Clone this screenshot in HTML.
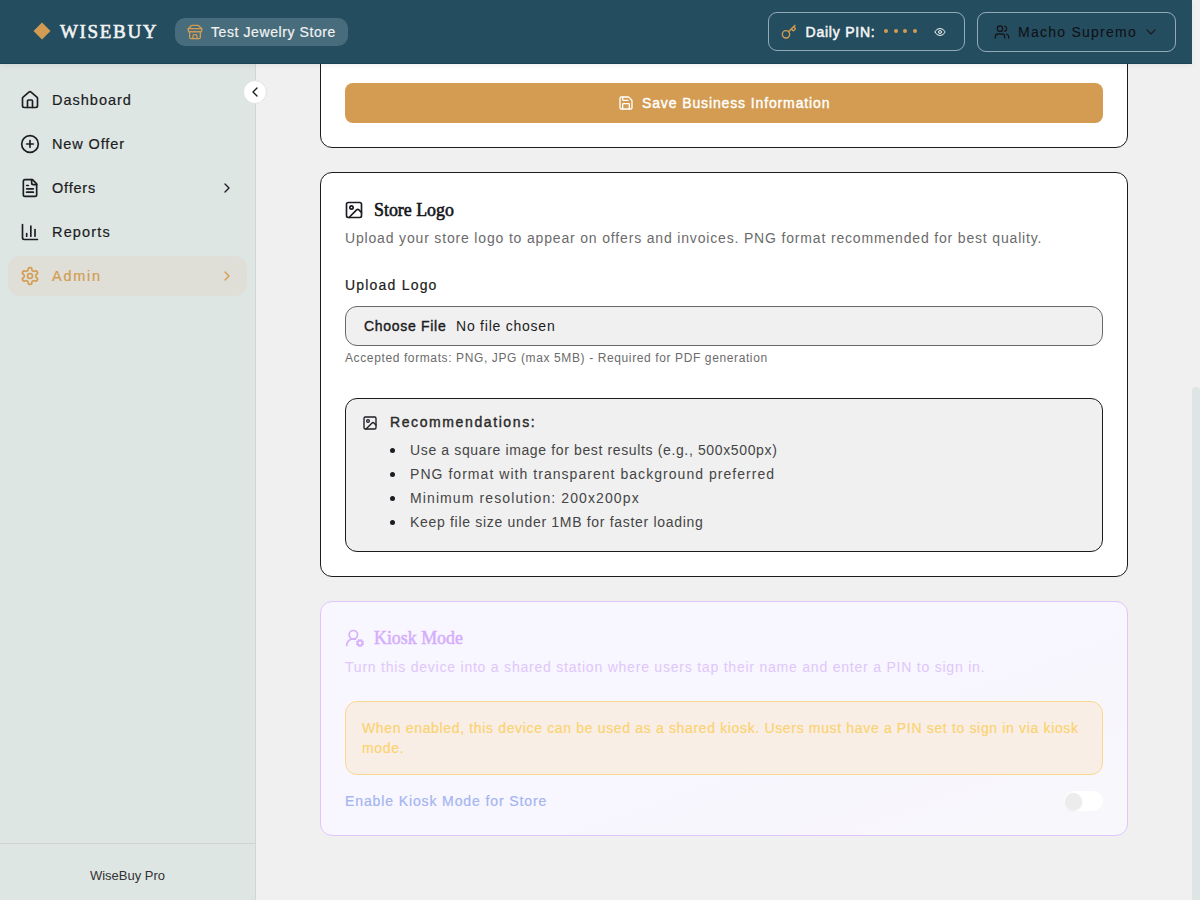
<!DOCTYPE html>
<html><head><meta charset="utf-8">
<style>
*{box-sizing:border-box;margin:0;padding:0}
html,body{width:1200px;height:900px;overflow:hidden;background:#f0f0f0;font-family:"Liberation Sans",sans-serif;color:#1c1c22}
.abs{position:absolute}
svg{display:block;fill:none;stroke:currentColor;stroke-width:2;stroke-linecap:round;stroke-linejoin:round}
.t{position:absolute;white-space:nowrap;line-height:1}
#header{position:absolute;left:0;top:0;width:1192px;height:64px;background:#244e60;border-bottom:1px solid #1b4354;box-shadow:0 2px 5px rgba(0,0,0,.05);z-index:5}
#sidebar{position:absolute;left:0;top:64px;width:256px;height:836px;background:#dee6e4;border-right:1px solid #d0d6d6}
#scroll{position:absolute;left:1192px;top:0;width:8px;height:900px;background:#f0f0f0}
#thumb{position:absolute;left:1192px;top:387px;width:8px;height:513px;background:#dde5e5;border-radius:4px 4px 0 0}
.nav{position:absolute;left:8px;width:239px;height:40px;border-radius:12px}
.nav svg{position:absolute;left:12px;top:10px;width:20px;height:20px}
.nav .lbl{position:absolute;left:44px;top:12.5px;font-size:14.5px;line-height:1;white-space:nowrap}
.nav .chev{left:211px;top:12px;width:16px;height:16px}
.card{position:absolute;left:320px;width:808px;background:#fff;border:1px solid #1c1c1c;border-radius:12px}
</style></head>
<body>
<div id="header">
  <div class="abs" style="left:36px;top:25px;width:12px;height:12px;background:#d39c52;transform:rotate(45deg)"></div>
  <div id="wisebuy" class="t" style="left:60px;top:22px;font-family:'Liberation Serif',serif;font-size:19px;letter-spacing:1.667px;color:#f3f3f3;-webkit-text-stroke:0.6px currentColor">WISEBUY</div>
  <div class="abs" style="left:175px;top:18px;width:173px;height:28px;border-radius:10px;background:#476d7d"></div>
  <svg class="abs" style="left:187px;top:24px;width:16px;height:16px;color:#d39c52" viewBox="0 0 24 24"><path d="m2 7 4.41-4.41A2 2 0 0 1 7.830 2h8.34a2 2 0 0 1 1.42.59L22 7"/><path d="M4 12v8a2 2 0 0 0 2 2h12a2 2 0 0 0 2-2v-8"/><path d="M15 22v-4a2 2 0 0 0-2-2h-2a2 2 0 0 0-2 2v4"/><path d="M2 7h20"/><path d="M22 7v3a2 2 0 0 1-2 2a2.7 2.7 0 0 1-1.59-.63.7.7 0 0 0-.82 0A2.7 2.7 0 0 1 16 12a2.7 2.7 0 0 1-1.590-.63.7.7 0 0 0-.82 0A2.7 2.7 0 0 1 12 12a2.7 2.7 0 0 1-1.59-.63.7.7 0 0 0-.82 0A2.7 2.7 0 0 1 8 12a2.7 2.7 0 0 1-1.59-.63.7.7 0 0 0-.82 0A2.7 2.7 0 0 1 4 12a2 2 0 0 1-2-2V7"/></svg>
  <div id="store" class="t" style="left:211px;top:25px;font-size:14px;color:#f2f2f2;letter-spacing:0.589px;-webkit-text-stroke:0.2px currentColor">Test Jewelry Store</div>

  <div class="abs" style="left:768px;top:12px;width:197px;height:39px;border:1px solid rgba(220,232,240,.6);border-radius:9px"></div>
  <svg class="abs" style="left:781px;top:24px;width:16px;height:16px;color:#d39c52" viewBox="0 0 24 24"><path d="m15.5 7.5 2.3 2.3a1 1 0 0 0 1.4 0l2.1-2.1a1 1 0 0 0 0-1.4L19 4"/><path d="m21 2-9.6 9.6"/><circle cx="7.5" cy="15.5" r="5.5"/></svg>
  <div id="pin" class="t" style="left:805.5px;top:25px;font-size:14px;color:#f7f7f7;-webkit-text-stroke:0.5px currentColor;letter-spacing:0.777px">Daily PIN:</div>
  <div class="abs" style="left:884px;top:29px;width:4px;height:4px;border-radius:50%;background:#d39c52"></div>
  <div class="abs" style="left:893.5px;top:29px;width:4px;height:4px;border-radius:50%;background:#d39c52"></div>
  <div class="abs" style="left:903px;top:29px;width:4px;height:4px;border-radius:50%;background:#d39c52"></div>
  <div class="abs" style="left:912.5px;top:29px;width:4px;height:4px;border-radius:50%;background:#d39c52"></div>
  <svg class="abs" style="left:934px;top:26px;width:12px;height:12px;color:#f2f2f2" viewBox="0 0 24 24"><path d="M2.062 12.348a1 1 0 0 1 0-.696 10.75 10.75 0 0 1 19.876 0 1 1 0 0 1 0 .696 10.75 10.75 0 0 1-19.876 0"/><circle cx="12" cy="12" r="3"/></svg>

  <div class="abs" style="left:977px;top:12px;width:199px;height:40px;border:1px solid rgba(220,232,240,.6);border-radius:9px"></div>
  <svg class="abs" style="left:994px;top:24px;width:16px;height:16px;color:#18161c" viewBox="0 0 24 24"><path d="M16 21v-2a4 4 0 0 0-4-4H6a4 4 0 0 0-4 4v2"/><circle cx="9" cy="7" r="4"/><path d="M22 21v-2a4 4 0 0 0-3-3.87"/><path d="M16 3.13a4 4 0 0 1 0 7.75"/></svg>
  <div id="macho" class="t" style="left:1018px;top:24.5px;font-size:14px;color:#121016;letter-spacing:1.248px;-webkit-text-stroke:0.1px currentColor">Macho Supremo</div>
  <svg class="abs" style="left:1143px;top:24px;width:16px;height:16px;color:#1c1c22" viewBox="0 0 24 24"><path d="m6 9 6 6 6-6"/></svg>
</div>

<div id="sidebar">
  <div class="nav" style="top:16px">
    <svg viewBox="0 0 24 24"><path d="M15 21v-8a1 1 0 0 0-1-1h-4a1 1 0 0 0-1 1v8"/><path d="M3 10a2 2 0 0 1 .709-1.528l7-5.999a2 2 0 0 1 2.582 0l7 5.999A2 2 0 0 1 21 10v9a2 2 0 0 1-2 2H5a2 2 0 0 1-2-2z"/></svg>
    <div id="dashboard" class="lbl" style="letter-spacing:1.0px;-webkit-text-stroke:0.2px currentColor">Dashboard</div>
  </div>
  <div class="nav" style="top:60px">
    <svg viewBox="0 0 24 24"><circle cx="12" cy="12" r="10"/><path d="M8 12h8"/><path d="M12 8v8"/></svg>
    <div id="newoffer" class="lbl" style="letter-spacing:0.875px;-webkit-text-stroke:0.2px currentColor">New Offer</div>
  </div>
  <div class="nav" style="top:104px">
    <svg viewBox="0 0 24 24"><path d="M15 2H6a2 2 0 0 0-2 2v16a2 2 0 0 0 2 2h12a2 2 0 0 0 2-2V7Z"/><path d="M14 2v4a2 2 0 0 0 2 2h4"/><path d="M10 9H8"/><path d="M16 13H8"/><path d="M16 17H8"/></svg>
    <div id="offers" class="lbl" style="letter-spacing:0.8px;-webkit-text-stroke:0.2px currentColor">Offers</div>
    <svg class="chev" viewBox="0 0 24 24"><path d="m9 18 6-6-6-6"/></svg>
  </div>
  <div class="nav" style="top:148px">
    <svg viewBox="0 0 24 24"><path d="M3 3v16a2 2 0 0 0 2 2h16"/><path d="M18 17V9"/><path d="M13 17V5"/><path d="M8 17v-3"/></svg>
    <div id="reports" class="lbl" style="letter-spacing:1.166px;-webkit-text-stroke:0.2px currentColor">Reports</div>
  </div>
  <div class="nav" style="top:192px;background:#dfded7;color:#d39c52">
    <svg viewBox="0 0 24 24"><path d="M12.22 2h-.44a2 2 0 0 0-2 2v.18a2 2 0 0 1-1 1.73l-.43.25a2 2 0 0 1-2 0l-.15-.08a2 2 0 0 0-2.73.73l-.22.38a2 2 0 0 0 .73 2.73l.15.1a2 2 0 0 1 1 1.72v.51a2 2 0 0 1-1 1.74l-.15.09a2 2 0 0 0-.73 2.730l.22.38a2 2 0 0 0 2.73.73l.15-.08a2 2 0 0 1 2 0l.43.25a2 2 0 0 1 1 1.73V20a2 2 0 0 0 2 2h.44a2 2 0 0 0 2-2v-.18a2 2 0 0 1 1-1.73l.43-.25a2 2 0 0 1 2 0l.15.08a2 2 0 0 0 2.73-.73l.22-.39a2 2 0 0 0-.73-2.73l-.15-.08a2 2 0 0 1-1-1.740v-.5a2 2 0 0 1 1-1.74l.15-.09a2 2 0 0 0 .73-2.73l-.22-.38a2 2 0 0 0-2.73-.73l-.15.08a2 2 0 0 1-2 0l-.43-.25a2 2 0 0 1-1-1.73V4a2 2 0 0 0-2-2z"/><circle cx="12" cy="12" r="3"/></svg>
    <div id="admin" class="lbl" style="letter-spacing:1.75px;-webkit-text-stroke:0.2px currentColor">Admin</div>
    <svg class="chev" viewBox="0 0 24 24"><path d="m9 18 6-6-6-6"/></svg>
  </div>
  <div class="abs" style="left:0;top:779px;width:255px;height:1px;background:#ccd3d2"></div>
  <div id="footer" class="t" style="left:0;width:255px;text-align:center;top:805px;font-size:13px;color:#333">WiseBuy Pro</div>
</div>
<div class="abs" style="left:243.2px;top:80px;width:24px;height:24px;border-radius:50%;background:#fff;border:1px solid #dde3e3;z-index:6">
  <svg class="abs" style="left:3px;top:3px;width:16px;height:16px;color:#1c1c22" viewBox="0 0 24 24"><path d="m15 18-6-6 6-6"/></svg>
</div>

<div id="scroll"></div>
<div id="thumb"></div>

<!-- main -->
<div class="card" style="top:-200px;height:348px">
  <div class="abs" style="left:24px;top:282px;width:758px;height:40px;border-radius:8px;background:#d39c52"></div>
  <svg class="abs" style="left:297px;top:294px;width:16px;height:16px;color:#fff" viewBox="0 0 24 24"><path d="M15.2 3a2 2 0 0 1 1.4.6l3.8 3.8a2 2 0 0 1 .6 1.4V19a2 2 0 0 1-2 2H5a2 2 0 0 1-2-2V5a2 2 0 0 1 2-2z"/><path d="M17 21v-7a1 1 0 0 0-1-1H8a1 1 0 0 0-1 1v7"/><path d="M7 3v4a1 1 0 0 0 1 1h7"/></svg>
  <div id="save" class="t" style="left:321px;top:295px;font-size:14px;color:#fff;letter-spacing:0.874px;-webkit-text-stroke:0.4px currentColor">Save Business Information</div>
</div>

<div class="card" style="top:172px;height:405px">
  <svg class="abs" style="left:23px;top:27px;width:20px;height:20px;color:#1c1c22" viewBox="0 0 24 24"><rect width="18" height="18" x="3" y="3" rx="2" ry="2"/><circle cx="9" cy="9" r="2"/><path d="m21 15-3.086-3.086a2 2 0 0 0-2.828 0L6 21"/></svg>
  <div id="storelogo" class="t" style="left:53px;top:27px;font-family:'Liberation Serif',serif;font-size:19px;-webkit-text-stroke:0.6px currentColor;transform-origin:0 0;transform:scaleX(.94);color:#141418">Store Logo</div>
  <div id="desc" class="t" style="left:24px;top:58px;font-size:14px;color:#6b6b6b;letter-spacing:0.832px">Upload your store logo to appear on offers and invoices. PNG format recommended for best quality.</div>
  <div id="uplabel" class="t" style="left:24px;top:105px;font-size:14px;color:#1c1c22;letter-spacing:1.2px;-webkit-text-stroke:0.2px currentColor">Upload Logo</div>
  <div class="abs" style="left:24px;top:133px;width:758px;height:40px;border:1px solid #686868;border-radius:12px;background:#f0f0f0"></div>
  <div id="choose" class="t" style="left:43px;top:146px;font-size:14px;color:#1c1c22;letter-spacing:0.7px;-webkit-text-stroke:0.4px currentColor">Choose File</div>
  <div id="nofile" class="t" style="left:135px;top:146px;font-size:14px;color:#1c1c22;letter-spacing:0.769px">No file chosen</div>
  <div id="accepted" class="t" style="left:24px;top:179px;font-size:12px;color:#6b6b6b;letter-spacing:0.615px">Accepted formats: PNG, JPG (max 5MB) - Required for PDF generation</div>
  <div class="abs" style="left:24px;top:225px;width:758px;height:154px;border:1px solid #1c1c1c;border-radius:12px;background:#f0f0f0"></div>
  <svg class="abs" style="left:41px;top:242px;width:16px;height:16px;color:#1c1c22" viewBox="0 0 24 24"><rect width="18" height="18" x="3" y="3" rx="2" ry="2"/><circle cx="9" cy="9" r="2"/><path d="m21 15-3.086-3.086a2 2 0 0 0-2.828 0L6 21"/></svg>
  <div id="recs" class="t" style="left:69px;top:242px;font-size:14px;color:#2a2a2a;letter-spacing:1.601px;-webkit-text-stroke:0.4px currentColor">Recommendations:</div>
  <div class="abs" style="left:69px;top:275px;width:5px;height:5px;border-radius:50%;background:#1c1c22"></div>
  <div id="b1" class="t" style="left:89px;top:270px;font-size:14px;color:#454545;letter-spacing:0.634px">Use a square image for best results (e.g., 500x500px)</div>
  <div class="abs" style="left:69px;top:299px;width:5px;height:5px;border-radius:50%;background:#1c1c22"></div>
  <div id="b2" class="t" style="left:89px;top:294px;font-size:14px;color:#454545;letter-spacing:1.042px">PNG format with transparent background preferred</div>
  <div class="abs" style="left:69px;top:323px;width:5px;height:5px;border-radius:50%;background:#1c1c22"></div>
  <div id="b3" class="t" style="left:89px;top:318px;font-size:14px;color:#454545;letter-spacing:1.107px">Minimum resolution: 200x200px</div>
  <div class="abs" style="left:69px;top:347px;width:5px;height:5px;border-radius:50%;background:#1c1c22"></div>
  <div id="b4" class="t" style="left:89px;top:342px;font-size:14px;color:#454545;letter-spacing:0.69px">Keep file size under 1MB for faster loading</div>
</div>

<div class="card" style="top:601px;height:235px;background:linear-gradient(160deg,#f8f6fe 0%,#f8f6fe 55%,#f8f7fb 100%);border-color:#e0c6fc">
  <svg class="abs" style="left:24px;top:26px;width:20px;height:20px;color:#d5aefc" viewBox="0 0 24 24"><path d="m14.305 19.53.923-.382"/><path d="m15.228 16.852-.923-.383"/><path d="m16.852 15.228-.383-.923"/><path d="m16.852 20.772-.383.924"/><path d="m19.148 15.228.383-.923"/><path d="m19.53 21.696-.382-.924"/><path d="M2 21a8 8 0 0 1 10.434-7.62"/><path d="m20.772 16.852.924-.383"/><path d="m20.772 19.148.924.383"/><circle cx="10" cy="8" r="5"/><circle cx="18" cy="18" r="3"/></svg>
  <div id="kiosk" class="t" style="left:53px;top:26px;font-family:'Liberation Serif',serif;font-size:19px;-webkit-text-stroke:0.5px currentColor;transform-origin:0 0;transform:scaleX(.94);color:#d4adfc">Kiosk Mode</div>
  <div id="turn" class="t" style="left:24px;top:58px;font-size:14px;color:#dfc7fb;letter-spacing:0.782px">Turn this device into a shared station where users tap their name and enter a PIN to sign in.</div>
  <div class="abs" style="left:24px;top:99px;width:758px;height:74px;border:1px solid #fad98f;border-radius:12px;background:#f9eee6"></div>
  <div id="when1" class="t" style="left:41px;top:119px;font-size:14px;color:#fbd370;letter-spacing:0.657px;-webkit-text-stroke:0.2px currentColor">When enabled, this device can be used as a shared kiosk. Users must have a PIN set to sign in via kiosk</div>
  <div id="when2" class="t" style="left:41px;top:139px;font-size:14px;color:#fbd370;letter-spacing:0.657px;-webkit-text-stroke:0.2px currentColor">mode.</div>
  <div id="enable" class="t" style="left:24px;top:192px;font-size:14px;color:#a3b5f2;letter-spacing:0.885px;-webkit-text-stroke:0.2px currentColor">Enable Kiosk Mode for Store</div>
  <div class="abs" style="left:743px;top:189px;width:39px;height:20px;border-radius:10px;background:#fff"></div>
  <div class="abs" style="left:744px;top:191px;width:17px;height:17px;border-radius:50%;background:#ececec;box-shadow:0 1px 2px rgba(0,0,0,.08)"></div>
</div>

</body></html>
